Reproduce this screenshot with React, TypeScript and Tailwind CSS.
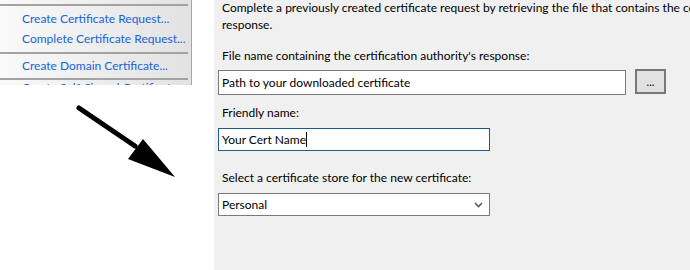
import React from "react";

const font = { fontFamily: '"Segoe UI", Lato, "Noto Sans", sans-serif' };

function Arrow() {
  return (
    <svg width="120" height="90" viewBox="0 0 120 90" className="ml-[60px] mt-[6px]">
      <line x1="19" y1="17" x2="75" y2="55" stroke="#000" strokeWidth="5" strokeLinecap="round" />
      <polygon points="83,48 68,68 115,86" fill="#000" />
    </svg>
  );
}

function MenuPanel() {
  const line = "h-[2px] w-[188px] bg-[#a3a3a3]";
  return (
    <div className="w-[192px] h-[85px] overflow-hidden border-r border-[#a8a8a8] bg-gradient-to-r from-[#fafafa] to-[#e2e2e2] text-[12px] text-[#1662dc] whitespace-nowrap">
      <div className="h-[4px]" />
      <div className={line} />
      <div className="pl-[22px] leading-[20px] mt-[3px]">Create Certificate Request...</div>
      <div className="pl-[22px] leading-[20px]">Complete Certificate Request...</div>
      <div className={line + " mt-[3px]"} />
      <div className="pl-[22px] leading-[20px] mt-[2px]">Create Domain Certificate...</div>
      <div className={line + " mt-[2px]"} />
      <div className="pl-[22px] leading-[16px]">Create Self-Signed Certificate...</div>
    </div>
  );
}

export default function App() {
  return (
    <div className="w-[690px] h-[270px] bg-white flex overflow-hidden" style={font}>
      <div className="w-[214px] shrink-0 flex flex-col">
        <MenuPanel />
        <Arrow />
      </div>
      <div className="flex-1 min-w-0 bg-[#f0f0f0] pl-[4px] text-[12px] text-black">
        <p className="pl-[4px] leading-[17px] -mt-[1px] whitespace-nowrap">
          Complete a previously created certificate request by retrieving the file that contains the certificate authority's
        </p>
        <p className="pl-[4px] leading-[17px]">response.</p>
        <div className="pl-[4px] leading-[17px] mt-[14px]">File name containing the certification authority's response:</div>
        <div className="flex items-start mt-[6px]">
          <div className="w-[408px] h-[25px] border border-[#7a7a7a] bg-white pl-[3px] leading-[23px]">
            Path to your downloaded certificate
          </div>
          <div className="ml-[9px] -mt-[1px] w-[31px] h-[25px] border-2 border-[#787878] bg-[#e1e1e1] flex items-center justify-center text-[11px] leading-none">
            ...
          </div>
        </div>
        <div className="pl-[4px] leading-[17px] mt-[9px]">Friendly name:</div>
        <div className="mt-[7px] w-[272px] h-[23px] border border-[#1e5a8c] bg-white pl-[3px] leading-[21px] flex items-center">
          <span>Your Cert Name</span>
          <span className="w-px h-[15px] bg-black" />
        </div>
        <div className="pl-[4px] leading-[17px] mt-[18px]">Select a certificate store for the new certificate:</div>
        <div className="mt-[7px] w-[272px] h-[23px] border border-[#7a7a7a] bg-white pl-[3px] pr-[6px] flex items-center justify-between">
          <span className="leading-[21px]">Personal</span>
          <svg width="9" height="6" viewBox="0 0 9 6">
            <polyline points="1,1 4.5,4.5 8,1" fill="none" stroke="#5a5a5a" strokeWidth="1.6" />
          </svg>
        </div>
      </div>
    </div>
  );
}
